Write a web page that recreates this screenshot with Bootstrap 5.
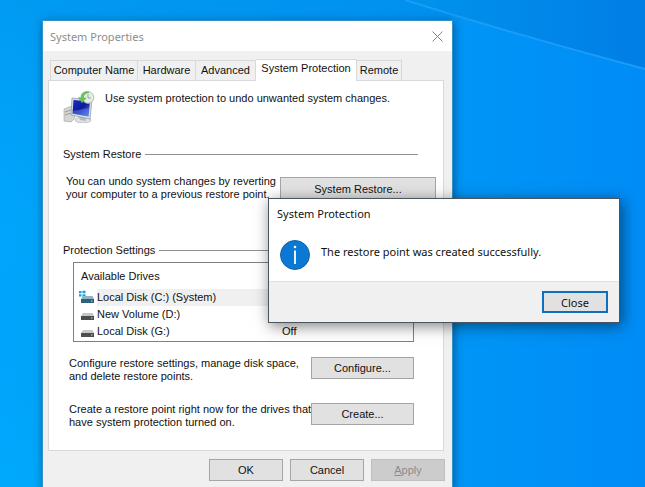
<!DOCTYPE html>
<html lang="en">
<head>
<meta charset="utf-8">
<meta name="viewport" content="width=device-width, initial-scale=1">
<title>System Properties</title>
<link href="https://cdn.jsdelivr.net/npm/bootstrap@5.3.0/dist/css/bootstrap.min.css" rel="stylesheet">
<style>
:root { --ui: "Liberation Sans", Arial, sans-serif; --title: "Noto Sans", "Open Sans", sans-serif; }
body { font-family: var(--ui); font-size: 11px; line-height: 13px; color: #111; }
.desktop { min-height: 100vh; background: #0092f6; }
.wallpaper { inset: 0; width: 100%; height: 100%; }
.win-props { left: 42px; top: 20px; width: 411px; background: #f0f0f0; border: 1px solid #3292c6; border-bottom: 0; box-shadow: 1px 2px 9px rgba(0,30,70,.5); }
.win-title { height: 30px; padding: 0 9px 0 7px; background: #fff; color: #8d8d8d; font-family: var(--title); }
.icon-btn { border: 0; background: none; padding: 0; line-height: 0; }
.props-body { padding: 8px 7px 8px 5px; }
.tabs { padding: 0 2px; height: 21px; }
.tab-btn { height: 20px; padding: 0; background: #f0f0f0; border: 1px solid #d9d9d9; border-width: 1px 1px 0 0; color: #111; white-space: nowrap; }
.tab-btn:first-child { border-left-width: 1px; }
.tab-btn.active { height: 22px; margin-bottom: -1px; padding-bottom: 4px; background: #fff; position: relative; }
.w-88 { width: 88px; } .w-58 { width: 58px; } .w-60 { width: 60px; } .w-101 { width: 101px; } .w-45 { width: 45px; }
.tab-panel { background: #fff; border: 1px solid #d9d9d9; margin-right: 1px; padding: 10px 7px 21px 14px; }
.intro { gap: 10px; margin-bottom: 24px; }
.intro p { padding-top: 1px; }
.sect { gap: 4px; height: 14px; margin-right: 18px; font-weight: 400; font-size: 11px; line-height: 14px; }
.rule { height: 1px; background: #8f8f8f; }
.restore-row { margin: 14px 0 42px 3px; }
.w-btn { flex-shrink: 0; height: 22px; padding: 0; background: #e1e1e1; border: 1px solid #a5a5a5; color: #111; }
.w-btn:disabled { background: #ccc; border-color: #bfbfbf; color: #8c8c8c; }
.btn-restore { width: 156px; height: 24px; margin-top: 2px; }
.btn-side { width: 103px; }
.btn-foot { width: 74px; }
.indent { margin-left: 6px; margin-right: 22px; }
.indent p, .restore-row p { min-width: 0; }
.drives { margin: 5px 22px 15px 10px; padding-bottom: 1px; border: 1px solid #7d8187; }
.drives th { height: 26px; padding: 0 0 0 7px; font-weight: 400; }
.drives td { height: 17px; padding: 0; }
.drives td:first-child { width: 23px; padding-left: 5px; line-height: 0; }
.drives td:last-child { width: 131px; }
.drives .picked td + td { background: #f0f0f0; }
.below { margin-bottom: 20px; }
.foot { gap: 7px; margin-top: 8px; }
.win-msg { left: 268px; top: 198px; width: 352px; background: #fff; border: 1px solid #4b5560; box-shadow: 2px 3px 14px rgba(0,0,0,.5); font-family: var(--title); }
.msg-title { padding: 8px 8px 0; line-height: 14px; font-size: 11px; font-weight: 400; }
.msg-main { gap: 11px; padding: 19px 11px 11px; }
.msg-main p { padding-top: 5px; }
.msg-foot { height: 41px; padding-right: 11px; background: #f0f0f0; border-top: 1px solid #dfdfdf; }
.btn-close-msg { width: 66px; border: 2px solid #0c6fc0; }
</style>
</head>
<body>
<main class="desktop position-relative overflow-hidden">
  <svg class="wallpaper position-absolute" viewBox="0 0 645 487" preserveAspectRatio="none" aria-hidden="true">
    <defs>
      <linearGradient id="sky" x1="0" y1="0" x2="1" y2="0"><stop offset="0" stop-color="#00a6fb"/><stop offset=".6" stop-color="#0099f7"/><stop offset="1" stop-color="#008cf6"/></linearGradient>
      <linearGradient id="beam" x1="0" y1="0" x2="1" y2="0"><stop offset="0" stop-color="#0094ec"/><stop offset="1" stop-color="#007ee6"/></linearGradient>
      <linearGradient id="down" x1="0" y1="0" x2="0" y2="1"><stop offset="0" stop-color="#0080dc" stop-opacity=".3"/><stop offset=".5" stop-color="#0090f0" stop-opacity="0"/><stop offset="1" stop-color="#00b4ff" stop-opacity=".25"/></linearGradient>
    </defs>
    <path fill="url(#sky)" d="M0 0h645v487H0z"/>
    <path fill="url(#down)" d="M0 0h452v487H0z"/>
    <path fill="url(#beam)" d="M405 0h240v69Q520 36 405 0z"/>
    <path d="M405 0Q520 36 645 69" fill="none" stroke="#1a9cf8" stroke-width="2"/>
  </svg>

  <section class="win-props position-absolute" aria-label="System Properties">
    <header class="win-title d-flex align-items-center justify-content-between">
      <span>System Properties</span>
      <button type="button" class="icon-btn" aria-label="Close System Properties"><svg width="11" height="11" viewBox="0 0 11 11"><path d="M.5.5l10 10M10.5.5l-10 10" stroke="#858585" fill="none"/></svg></button>
    </header>
    <div class="props-body">
      <div class="tabs d-flex align-items-end" role="tablist">
        <button type="button" role="tab" class="tab-btn w-88">Computer Name</button>
        <button type="button" role="tab" class="tab-btn w-58">Hardware</button>
        <button type="button" role="tab" class="tab-btn w-60">Advanced</button>
        <button type="button" role="tab" class="tab-btn w-101 active" aria-selected="true">System Protection</button>
        <button type="button" role="tab" class="tab-btn w-45">Remote</button>
      </div>
      <div class="tab-panel" role="tabpanel">
        <div class="intro d-flex">
          <svg width="32" height="32" viewBox="0 0 32 32" aria-hidden="true">
            <defs><linearGradient id="scr" x1="0" y1="0" x2="1" y2="1"><stop offset="0" stop-color="#1a2fc4"/><stop offset=".5" stop-color="#0e1a9c"/><stop offset="1" stop-color="#5d86ee"/></linearGradient></defs>
            <path d="M1 18l8-3 3 12-4 4-7-1z" fill="#d3d6d2" stroke="#9da3a3" stroke-width=".6"/>
            <path d="M2 21l6-2M2 24l6-2" stroke="#8c9494" stroke-width=".8"/>
            <ellipse cx="20" cy="29" rx="8" ry="3" fill="#dfe2e4" stroke="#a2a8ad" stroke-width=".6"/>
            <path d="M16 26l7 1v3l-6-1z" fill="#b3b9bf"/>
            <path d="M9 7l20 2-2 19L8 24z" fill="#d9dfe6" stroke="#8b949d" stroke-width=".7"/>
            <path d="M10.500 9l16.500 1.500-1.500 15L9.500 22.500z" fill="url(#scr)"/>
            <path d="M10 20l16-3-.5 8.500L9.500 22.500z" fill="#6b93f0" opacity=".45"/>
            <circle cx="25" cy="6.500" r="5.800" fill="#e4efe4" stroke="#b0c2b2"/>
            <path d="M25 3v4h3" fill="none" stroke="#8fa4ae"/>
            <path d="M26 1.300C21-.5 17.500 3 18 7l-2.500-.5L19 12l4-5h-2.500C20 4.500 22 2.500 26 1.300z" fill="#6cc45c" stroke="#3c9a36" stroke-width=".4"/>
          </svg>
          <p class="mb-0">Use system protection to undo unwanted system changes.</p>
        </div>

        <h2 class="sect d-flex align-items-center mb-0"><span>System Restore</span><span class="rule flex-grow-1"></span></h2>
        <div class="restore-row d-flex justify-content-between align-items-start">
          <p class="mb-0 text-nowrap">You can undo system changes by reverting<br>your computer to a previous restore point.</p>
          <button type="button" class="w-btn btn-restore">System Restore...</button>
        </div>

        <h2 class="sect d-flex align-items-center mb-0"><span>Protection Settings</span><span class="rule flex-grow-1"></span></h2>
        <div class="drives">
          <table class="w-100">
            <thead><tr><th colspan="3" scope="col">Available Drives</th></tr></thead>
            <tbody>
              <tr class="picked">
                <td><svg width="16" height="15" viewBox="0 0 16 15" aria-hidden="true"><path d="M0 1h2.500v2.200H0zM3.500.7h3v2.500h-3zM0 4.200h2.500v2.200H0zM3.500 4.200h3v2.500h-3z" fill="#1ba1d8"/><path d="M4 6h9.500L15 9H2z" fill="#8fb4c6"/><path d="M2 9h13v4H2z" fill="#2f6178"/><path d="M12 11h1.500" stroke="#8fe3ff"/></svg></td>
                <td>Local Disk (C:) (System)</td><td></td>
              </tr>
              <tr>
                <td><svg width="16" height="15" viewBox="0 0 16 15" aria-hidden="true"><path d="M4 6h9.500L15 9H2z" fill="#c4c7c6"/><path d="M2 9h13v4H2z" fill="#4b4e4e"/><path d="M12 11h1.500" stroke="#c8d8cc"/></svg></td>
                <td>New Volume (D:)</td><td></td>
              </tr>
              <tr>
                <td><svg width="16" height="15" viewBox="0 0 16 15" aria-hidden="true"><path d="M4 6h9.500L15 9H2z" fill="#c4c7c6"/><path d="M2 9h13v4H2z" fill="#4b4e4e"/><path d="M12 11h1.500" stroke="#c8d8cc"/></svg></td>
                <td>Local Disk (G:)</td><td>Off</td>
              </tr>
            </tbody>
          </table>
        </div>

        <div class="indent below d-flex justify-content-between align-items-start">
          <p class="mb-0 text-nowrap">Configure restore settings, manage disk space,<br>and delete restore points.</p>
          <button type="button" class="w-btn btn-side">Configure...</button>
        </div>
        <div class="indent d-flex justify-content-between align-items-start">
          <p class="mb-0 text-nowrap">Create a restore point right now for the drives that<br>have system protection turned on.</p>
          <button type="button" class="w-btn btn-side">Create...</button>
        </div>
      </div>
      <div class="foot d-flex justify-content-end">
        <button type="button" class="w-btn btn-foot">OK</button>
        <button type="button" class="w-btn btn-foot">Cancel</button>
        <button type="button" class="w-btn btn-foot" disabled><u>A</u>pply</button>
      </div>
    </div>
  </section>

  <section class="win-msg position-absolute" role="dialog" aria-labelledby="msgTitle">
    <h2 class="msg-title mb-0" id="msgTitle">System Protection</h2>
    <div class="msg-main d-flex">
      <svg width="30" height="30" viewBox="0 0 30 30" aria-hidden="true"><circle cx="15" cy="15" r="14.500" fill="#0b78d4" stroke="#1565a8"/><path d="M15 10.500v13.500" stroke="#fff" stroke-width="1.800"/><circle cx="15" cy="7" r="1.300" fill="#fff"/></svg>
      <p class="mb-0">The restore point was created successfully.</p>
    </div>
    <div class="msg-foot d-flex align-items-center justify-content-end">
      <button type="button" class="w-btn btn-close-msg">Close</button>
    </div>
  </section>
</main>
<script src="https://cdn.jsdelivr.net/npm/bootstrap@5.3.0/dist/js/bootstrap.bundle.min.js"></script>
</body>
</html>
